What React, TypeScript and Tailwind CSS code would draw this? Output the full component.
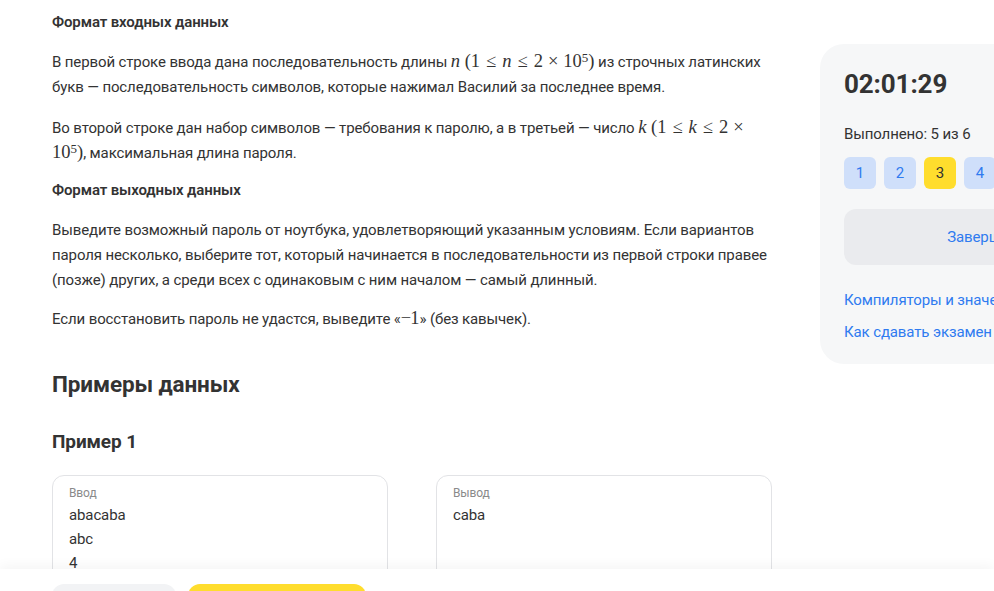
import React from 'react';

const M = ({ children }: { children: React.ReactNode }) => (
  <span className="font-['Liberation_Serif',serif] text-[18.5px] leading-none tracking-normal whitespace-nowrap">{children}</span>
);

const V = ({ children }: { children: React.ReactNode }) => <i>{children}</i>;

const Rel = ({ children }: { children: React.ReactNode }) => <span className="mx-[6px]">{children}</span>;

const Bin = ({ children }: { children: React.ReactNode }) => <span className="mx-[5px]">{children}</span>;

const Pow = () => (
  <>
    10<sup className="relative -top-[5px] text-[13px]">5</sup>
  </>
);

const tasks = [1, 2, 3, 4, 5, 6];

export default function App() {
  return (
    <div className="relative h-screen overflow-hidden bg-white font-['Roboto',sans-serif] tracking-[-0.12px] text-[#333333]">
      <div className="flex gap-12 pl-[52px]">
        <main className="w-[720px] shrink-0 pt-[10px] text-[15px] leading-[25px]">
          <h3 className="font-semibold leading-6">Формат входных данных</h3>
          <p className="mt-4">
            В первой строке ввода дана последовательность длины <M><V>n</V> (1<Rel>≤</Rel><V>n</V><Rel>≤</Rel>2<Bin>×</Bin><Pow />)</M> из строчных латинских букв — последовательность символов, которые нажимал Василий за последнее время.
          </p>
          <p className="mt-4">
            Во второй строке дан набор символов — требования к паролю, а в третьей — число <M><V>k</V> (1<Rel>≤</Rel><V>k</V><Rel>≤</Rel>2<Bin>×</Bin></M> <M><Pow />)</M>, максимальная длина пароля.
          </p>
          <h3 className="mt-3 font-semibold leading-6">Формат выходных данных</h3>
          <p className="mt-4">
            Выведите возможный пароль от ноутбука, удовлетворяющий указанным условиям. Если вариантов пароля несколько, выберите тот, который начинается в последовательности из первой строки правее (позже) других, а среди всех с одинаковым с ним началом — самый длинный.
          </p>
          <p className="mt-[14px]">
            Если восстановить пароль не удастся, выведите «<M><span className="-mr-[1px]">−</span>1</M>» (без кавычек).
          </p>

          <h2 className="mt-9 text-[22.5px] font-bold leading-8">Примеры данных</h2>
          <h4 className="mt-7 text-[19px] font-bold leading-7">Пример 1</h4>

          <div className="mt-[19px] grid grid-cols-2 gap-12">
            <div className="h-[200px] rounded-xl border border-[#e2e3e6] px-4 pt-[9px]">
              <div className="text-[12px] leading-4 text-[#8a8a8a]">Ввод</div>
              <div className="mt-[2px] leading-6">
                <div>abacaba</div>
                <div>abc</div>
                <div>4</div>
              </div>
            </div>
            <div className="h-[200px] rounded-xl border border-[#e2e3e6] px-4 pt-[9px]">
              <div className="text-[12px] leading-4 text-[#8a8a8a]">Вывод</div>
              <div className="mt-[2px] leading-6">
                <div>caba</div>
              </div>
            </div>
          </div>
        </main>

        <aside className="mt-[44px] w-[394px] shrink-0 self-start rounded-3xl bg-[#f6f7f8] px-6 pt-6 pb-5">
          <div className="text-[26px] font-bold leading-8 text-[#333333]">02:01:29</div>
          <div className="mt-[22px] text-[15px] leading-6">Выполнено: 5 из 6</div>
          <div className="mt-[11px] flex gap-2">
            {tasks.map((t) => (
              <div
                key={t}
                className={
                  t === 3
                    ? 'flex h-8 w-8 items-center justify-center rounded-md bg-[#ffdd2d] text-[15px] text-[#333333]'
                    : 'flex h-8 w-8 items-center justify-center rounded-md bg-[#cfdffa] text-[15px] text-[#2f7bf0]'
                }
              >
                {t}
              </div>
            ))}
          </div>
          <button className="mt-5 flex h-14 w-full items-center justify-center rounded-xl bg-[#eaebee] text-[15px] text-[#2f7bf0]">
            Завершить экзамен
          </button>
          <div className="mt-[23px] flex flex-col gap-2 text-[15px] leading-6 text-[#2f7bf0]">
            <a>Компиляторы и значения лимитов</a>
            <a>Как сдавать экзамен</a>
          </div>
        </aside>
      </div>

      <div className="fixed inset-x-0 bottom-0 h-[22px] bg-white shadow-[0_-4px_12px_rgba(0,0,0,0.04)]">
        <div className="flex gap-3 pl-[52px] pt-[15px]">
          <div className="h-11 w-[124px] rounded-xl bg-[#f2f3f5]" />
          <div className="h-11 w-[178px] rounded-xl bg-[#ffdd2d]" />
        </div>
      </div>
    </div>
  );
}
